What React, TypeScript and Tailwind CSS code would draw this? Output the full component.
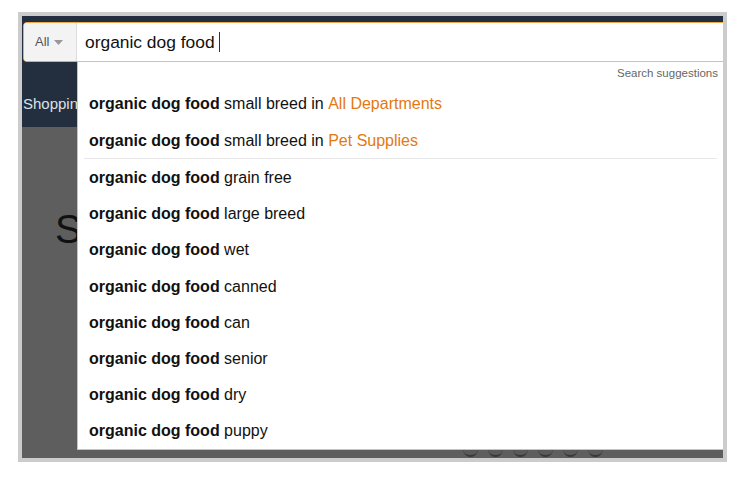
import React from "react";

const suffixes: { text: string; dept?: string }[] = [
  { text: "small breed in", dept: "All Departments" },
  { text: "small breed in", dept: "Pet Supplies" },
  { text: "grain free" },
  { text: "large breed" },
  { text: "wet" },
  { text: "canned" },
  { text: "can" },
  { text: "senior" },
  { text: "dry" },
  { text: "puppy" },
];

function Row({ text, dept }: { text: string; dept?: string }) {
  return (
    <div className="h-[36.4px] flex items-center pl-[11px] pt-[1px] text-[16px] text-[#111] whitespace-nowrap">
      <span className="font-bold">organic dog food</span>
      <span>&nbsp;{text}</span>
      {dept && <span className="text-[#e47911]">&nbsp;{dept}</span>}
    </div>
  );
}

export default function App() {
  return (
    <div
      className="w-[751px] h-[488px] bg-white pt-[12px] pl-[18px]"
      style={{ fontFamily: '"Liberation Sans", Arial, sans-serif' }}
    >
      <div className="w-[709px] h-[450px] border-4 border-[#cccccc] relative overflow-hidden flex flex-col">
        {/* navy header */}
        <div className="h-[111px] bg-[#232f3e] pt-[6px] pl-[1px] flex flex-col">
          <div className="h-[40px] w-[710px] flex border border-[#f0a84e] rounded-[4px] overflow-hidden bg-white">
            <div className="w-[53px] bg-[#f3f3f3] flex items-center pl-[11px] gap-[5px] text-[13px] text-[#555] border-r border-[#dcdcdc]">
              <span>All</span>
              <svg width="9" height="5" viewBox="0 0 9 5">
                <path d="M0 0 L9 0 L4.5 5 Z" fill="#999" />
              </svg>
            </div>
            <div className="flex-1 flex items-center pl-[8px] text-[17.4px] text-[#111]">
              <span>organic dog food</span>
              <span className="ml-[4px] w-px h-[20px] bg-[#333]" />
            </div>
          </div>
          <div className="mt-[34px] text-[15px] text-[#dde2e8] leading-none">Shopping</div>
        </div>
        {/* gray body */}
        <div className="flex-1 bg-[#5e5e5e] flex flex-col">
          <div className="pl-[33px] pt-[82px] text-[40px] leading-none text-[#111]">S</div>
          <div className="mt-auto mb-[1px] pl-[441px] flex gap-[10px]">
            {[0, 1, 2, 3, 4, 5].map((i) => (
              <div
                key={i}
                className="w-[15px] h-[16px] rounded-full border-b-[2px] border-[#383838] bg-[#5a5a5a]"
              />
            ))}
          </div>
        </div>
        {/* suggestions dropdown */}
        <div className="absolute left-[55px] top-[45px] w-[646px] h-[389px] bg-white border border-[#c4c4c4] border-r-0 flex flex-col">
          <div className="h-[24px] flex items-center justify-end pr-[5px] text-[11.5px] text-[#666]">
            Search suggestions
          </div>
          <Row {...suffixes[0]} />
          <Row {...suffixes[1]} />
          <div className="mx-[6px] h-px bg-[#e7e7e7]" />
          {suffixes.slice(2).map((s, i) => (
            <Row key={i} {...s} />
          ))}
        </div>
      </div>
    </div>
  );
}
